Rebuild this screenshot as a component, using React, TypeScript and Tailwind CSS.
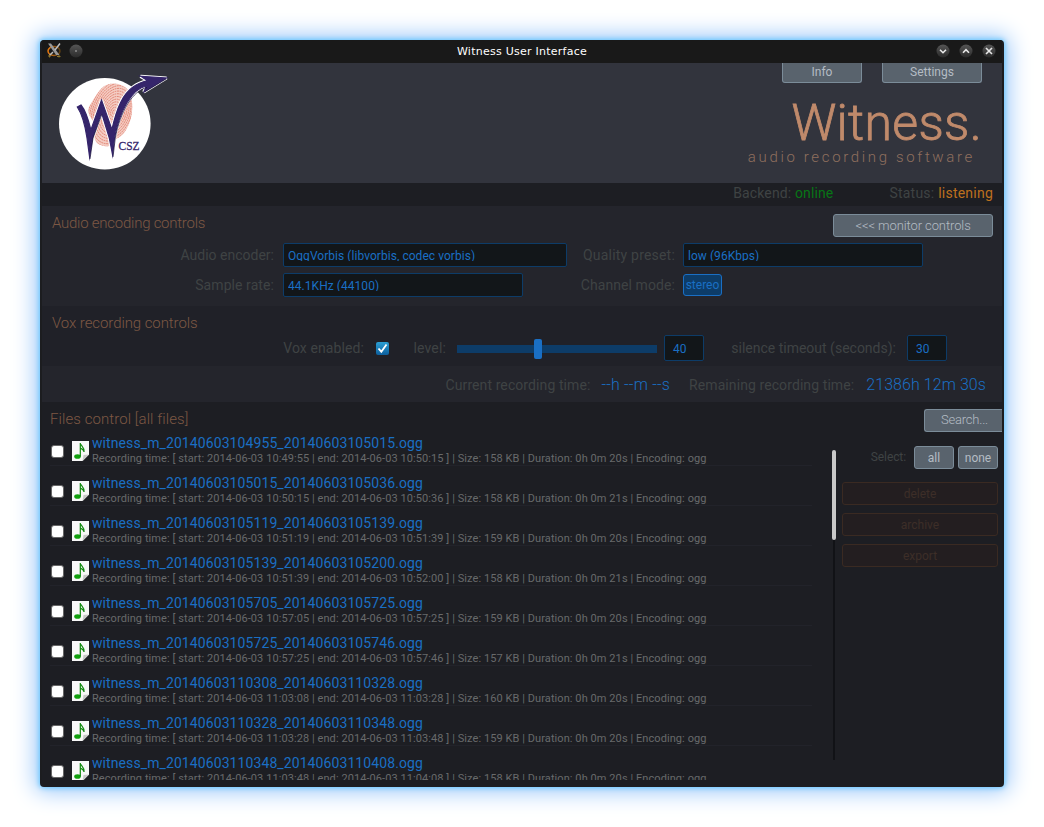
import React from "react";

type RecordingFile = { name: string; start: string; end: string; size: number; secs: number };

const files: RecordingFile[] = [
  { name: "witness_m_20140603104955_20140603105015.ogg", start: "10:49:55", end: "10:50:15", size: 158, secs: 20 },
  { name: "witness_m_20140603105015_20140603105036.ogg", start: "10:50:15", end: "10:50:36", size: 158, secs: 21 },
  { name: "witness_m_20140603105119_20140603105139.ogg", start: "10:51:19", end: "10:51:39", size: 159, secs: 20 },
  { name: "witness_m_20140603105139_20140603105200.ogg", start: "10:51:39", end: "10:52:00", size: 158, secs: 21 },
  { name: "witness_m_20140603105705_20140603105725.ogg", start: "10:57:05", end: "10:57:25", size: 159, secs: 20 },
  { name: "witness_m_20140603105725_20140603105746.ogg", start: "10:57:25", end: "10:57:46", size: 157, secs: 21 },
  { name: "witness_m_20140603110308_20140603110328.ogg", start: "11:03:08", end: "11:03:28", size: 160, secs: 20 },
  { name: "witness_m_20140603110328_20140603110348.ogg", start: "11:03:28", end: "11:03:48", size: 159, secs: 20 },
  { name: "witness_m_20140603110348_20140603110408.ogg", start: "11:03:48", end: "11:04:08", size: 158, secs: 20 },
];

function WindowButton({ d }: { d: string }) {
  return (
    <svg width="14" height="14" viewBox="0 0 14 14">
      <circle cx="7" cy="7" r="6.5" fill="url(#knob)" />
      <path d={d} fill="none" stroke="#e8e8e8" strokeWidth="1.6" />
    </svg>
  );
}

function TitleBar() {
  return (
    <div className="flex h-[23px] items-center bg-[#191919] pr-[6px] pb-[2px] pl-[5px]">
      <svg width="14" height="15" viewBox="0 0 14 15">
        <defs>
          <linearGradient id="knob" x1="0" y1="0" x2="0" y2="1">
            <stop offset="0" stopColor="#555" />
            <stop offset="1" stopColor="#2b2b2b" />
          </linearGradient>
          <linearGradient id="ring" x1="0" y1="0" x2="1" y2="0">
            <stop offset="0" stopColor="#e87a10" />
            <stop offset="1" stopColor="#5a3c10" />
          </linearGradient>
        </defs>
        <ellipse cx="7" cy="8" rx="6" ry="4.5" fill="none" stroke="url(#ring)" strokeWidth="1.5" />
        <path d="M1 .5h3l8.500 11.500h-3.500z" fill="#999" />
        <path d="M13 .500 8 7M6 9l-3.500 3.500" stroke="#bbb" strokeWidth="1.500" />
        <path d="M1 13h3M10 13.500h3.500M2.500 12v2.500M12 12v2.500" stroke="#8d742c" strokeWidth="1" />
      </svg>
      <svg className="ml-[8px]" width="14" height="14" viewBox="0 0 14 14">
        <circle cx="7" cy="7" r="6.500" fill="url(#knob)" />
        <circle cx="7" cy="7" r=".7" fill="#ddd" />
      </svg>
      <div className="flex-1 pt-[2px] pl-[25px] text-center font-['DejaVu_Sans'] text-[11px] leading-none tracking-[0.25px] text-white">
        Witness User Interface
      </div>
      <div className="flex gap-[9px]">
        <WindowButton d="M4 5.700 7 8.700 10 5.700" />
        <WindowButton d="M4 8.700 7 5.700 10 8.700" />
        <WindowButton d="M4 4l6 6M10 4l-6 6" />
      </div>
    </div>
  );
}

const LETTER =
  "M77.300 107L81 105C86 111 88.500 120 90.900 130L101.500 100 111.900 129.500C117 107 123 94 133 87C137 84 141 82 147.500 80.500L140.500 76.300 166.500 78 143.800 92 146.500 86C132 88.500 119.500 111 114.500 138L112.600 155 109.300 138 101.500 112.500 92.500 138 89.600 157 87 138C85 125 82 114 77.300 107Z";

function Logo() {
  return (
    <svg width="114" height="100" viewBox="57 72 114 100">
      <defs>
        <clipPath id="print">
          <path d="M103 87c5-4 13-5 20-1 6 3 9 9 9 16 1 11-1 20-6 28-3 5-7 8-11 9-3 7-6 8-11 7-6-1-9-4-10-10 0-4 1-9 0-13-3-6-7-9-5-16 4-6 8-15 14-20z" />
        </clipPath>
      </defs>
      <circle cx="104.800" cy="123.800" r="45.800" fill="#fff" />
      <g clipPath="url(#print)">
        <rect x="80" y="80" width="56" height="70" fill="#d9553a" opacity=".3" />
        <g fill="none" stroke="#cf3f26" strokeWidth=".8" opacity=".6" strokeDasharray="1.800 .7">
          {[1.500, 3.500, 5.500, 7.500, 9.500, 11.500, 13.500, 15.500, 17.500, 19.500, 21.500, 23.500, 25.500, 27.500, 29.500].map((r) => (
            <ellipse key={r} cx="114" cy="112" rx={r * 0.9} ry={r * 1.4} transform="rotate(20 114 112)" />
          ))}
        </g>
      </g>
      <path d={LETTER} fill="#fff" stroke="#fff" strokeWidth="3.200" strokeMiterlimit="3" />
      <path d={LETTER} fill="#35256b" stroke="#35256b" strokeWidth="1.200" strokeMiterlimit="8" />
      <path d="M166 79l-21.500 13M147 87.500C133 90 120 112 115.300 138L113 157M102 114L93 138 90 159" fill="none" stroke="#120c35" strokeWidth=".7" />
      <text x="118.500" y="149.500" fontFamily="Liberation Serif, serif" fontSize="13" textLength="21" lengthAdjust="spacingAndGlyphs" fill="#35256b" stroke="#35256b" strokeWidth=".3">
        CSZ
      </text>
    </svg>
  );
}

const slate = "flex items-center justify-center rounded-[3px] border border-[#7b8c99] bg-[#59636d] text-[#b4bcc4]";
const field = "flex h-6 items-center overflow-hidden rounded-[2px] border border-[#0d3c68] bg-[#121619] px-1 text-[12px] tracking-[0.05px] text-[#1a6fc4]";
const heading = "text-[15px] leading-[18px] font-light text-[#7d5844]";
const label = "text-right text-[14px] text-[#3f4344]";

function Header() {
  return (
    <header className="flex h-[120px] justify-between bg-[#32343d]">
      <div className="pt-[9px] pl-[15px]">
        <Logo />
      </div>
      <div className="flex flex-col items-end">
        <div className="flex gap-5 pr-5 text-[12px]">
          <div className={slate + " h-5 w-20 rounded-t-none border-t-0 pb-[1px]"}>Info</div>
          <div className={slate + " h-5 w-[100px] rounded-t-none border-t-0 pb-[1px]"}>Settings</div>
        </div>
        <div className="mt-[15px] mr-[20px] text-[50px] leading-[50px] font-light tracking-[0.3px] text-[#c08a6b] [-webkit-text-stroke:0.8px_#c08a6b]">
          Witness.
        </div>
        <div className="mr-[27px] text-[15px] leading-[18px] font-light tracking-[2.65px] text-[#8f6f5d]">audio recording software</div>
      </div>
    </header>
  );
}

function EncodingControls() {
  return (
    <section className="h-[100px] bg-[#24252c]">
      <div className="flex h-[37px] justify-between pt-2 pr-[9px] pl-[10px]">
        <h2 className={heading + " tracking-[-0.25px]"}>Audio encoding controls</h2>
        <div className={slate + " h-[23px] w-40 text-[13px] font-light tracking-[-0.1px]"}>&lt;&lt;&lt; monitor controls</div>
      </div>
      <div className="flex h-6 items-center">
        <div className={label + " w-[232px]"}>Audio encoder:</div>
        <div className={field + " ml-[9px] w-[284px]"}>
          <span className="h-3 overflow-hidden leading-[14px]">OggVorbis (libvorbis, codec vorbis)</span>
        </div>
        <div className={label + " w-[108px] tracking-[0.2px]"}>Quality preset:</div>
        <div className={field + " ml-2 w-[240px]"}>
          <span className="h-3 overflow-hidden leading-[14px]">low (96Kbps)</span>
        </div>
      </div>
      <div className="mt-[6px] flex h-6 items-center">
        <div className={label + " w-[232px] tracking-[0.08px]"}>Sample rate:</div>
        <div className={field + " ml-[9px] w-[240px] tracking-[0.2px]"}>
          <span className="h-3 overflow-hidden leading-[14px]">44.1KHz (44100)</span>
        </div>
        <div className={label + " w-[152px] tracking-[0.08px]"}>Channel mode:</div>
        <div className="ml-2 flex h-[22px] w-[39px] items-center justify-center rounded-[3px] border border-[#1a6fc4] bg-[#0d3c68] text-[12px] text-[#1a6fc4]">
          stereo
        </div>
      </div>
    </section>
  );
}

function VoxControls() {
  return (
    <section className="h-[60px] bg-[#202128]">
      <div className="h-[29px] pt-2 pl-[10px]">
        <h2 className={heading + " tracking-[-0.08px]"}>Vox recording controls</h2>
      </div>
      <div className="flex h-[26px] items-center">
        <div className={label + " w-[322px] tracking-[0.1px]"}>Vox enabled:</div>
        <div className="ml-3 flex size-[13px] items-center justify-center rounded-[2px] bg-linear-to-b from-[#2c9fd3] to-[#0d5f9d]">
          <svg width="11" height="11" viewBox="0 0 11 11">
            <path d="M1.500 5.500 4.300 8.700 9.500 1.500" fill="none" stroke="#fff" strokeWidth="1.800" />
          </svg>
        </div>
        <div className={label + " w-[57px] tracking-[0.15px]"}>level:</div>
        <div className="ml-[11px] flex h-5 w-[200px] items-center pt-[2px]">
          <div className="h-2 w-[77px] bg-[#0d3c68]" />
          <div className="h-5 w-2 rounded-[2px] bg-[#1a6fc4]" />
          <div className="h-2 flex-1 bg-[#0d3c68]" />
        </div>
        <div className="ml-[7px] flex h-[26px] w-10 shrink-0 items-center rounded-[2px] border border-[#0d3c68] bg-[#121619] pt-[1px] pl-2 text-[12px] text-[#1a6fc4]">40</div>
        <div className={label + " w-[192px]"}>silence timeout (seconds):</div>
        <div className="ml-[11px] flex h-[26px] w-10 shrink-0 items-center rounded-[2px] border border-[#0d3c68] bg-[#121619] pt-[1px] pl-2 text-[12px] text-[#1a6fc4]">30</div>
      </div>
    </section>
  );
}

function FileRow({ file }: { file: RecordingFile }) {
  return (
    <li className="flex h-10 w-[762px] shrink-0 border-b border-[#22232a]">
      <div className="mt-[19px] ml-[1px] size-[13px] rounded-[3px] border border-[#666] bg-white" />
      <svg className="mt-[15px] ml-[8px]" width="17" height="20" viewBox="0 0 17 20">
        <path d="M0 0h17v13.500L10.500 20H0z" fill="#f8f8f8" />
        <path d="M10.500 20l1-6 5.500-.5z" fill="#c8c8c8" />
        <ellipse cx="5.500" cy="15.500" rx="3.300" ry="2.300" fill="#12a00e" />
        <path d="M8.300 15.500V2c.4 3 4.600 4.500 3.800 9-.2-2-1.800-3-3.800-4" fill="none" stroke="#138a10" strokeWidth="1.200" />
      </svg>
      <div className="ml-[3px] pt-[9px] whitespace-nowrap">
        <div className="text-[14px] leading-[16px] tracking-[0.09px] text-[#1a6fc4]">{file.name}</div>
        <div className="pt-[1px] text-[11px] leading-[14px] tracking-[0.075px] text-[#686a6b]">
          Recording time: [ start: 2014-06-03 {file.start} | end: 2014-06-03 {file.end} ] | Size: {file.size} KB | Duration: 0h 0m {file.secs}s | Encoding: ogg
        </div>
      </div>
    </li>
  );
}

function FilesControl() {
  const disabled = "flex h-[23px] items-center justify-center rounded-[3px] border border-[#3a2a22] bg-[#231e20] text-[12px] text-[#3d2e28]";
  return (
    <section className="flex h-[378px] bg-[#1d1e23]">
      <div className="h-full w-[790px] overflow-hidden pl-2">
        <h2 className={heading + " h-6 pt-2 tracking-[0.08px]"}>Files control [all files]</h2>
        <ul className="flex flex-col">
          {files.map((f) => (
            <FileRow key={f.name} file={f} />
          ))}
        </ul>
      </div>
      <div className="flex w-1 flex-col items-center pt-12">
        <div className="h-[90px] w-1 shrink-0 rounded-[2px] bg-[#c8c8c8]" />
        <div className="h-[220px] w-[2px] bg-[#111216]" />
      </div>
      <div className="flex flex-1 flex-col pt-[7px]">
        <div className={slate + " h-[23px] w-[78px] self-end rounded-r-none border-r-0 pb-[1px] pl-[2px] text-[13px] font-light tracking-[-0.2px]"}>Search...</div>
        <div className="mt-[14px] flex items-center justify-end gap-1 pr-1 text-[12px]">
          <span className="mr-1 pb-[2px] tracking-[-0.1px] text-[#3f4344]">Select:</span>
          <div className={slate + " h-[23px] w-10"}>all</div>
          <div className={slate + " h-[23px] w-10"}>none</div>
        </div>
        <div className="mt-[13px] flex flex-col gap-2 pr-1 pl-[6px]">
          <div className={disabled}>delete</div>
          <div className={disabled}>archive</div>
          <div className={disabled}>export</div>
        </div>
      </div>
    </section>
  );
}

export default function App() {
  return (
    <main className="h-[827px] w-[1044px] overflow-hidden bg-white p-10 font-[Roboto,sans-serif]">
      <div className="h-[747px] w-[964px] overflow-hidden rounded-[4px] border-x-2 border-b-[7px] border-[#1c1d20] bg-[#1c1d20] shadow-[0_0_5px_1px_#68c8ff,0_0_22px_5px_#9cc8fa]">
        <TitleBar />
        <Header />
        <div className="flex h-[23px] items-center justify-end bg-[#1d1e23] pr-[9px] pb-[2px] text-[14px] text-[#3f4344]">
          <span className="mr-14 tracking-[0.13px]">
            Backend: <span className="text-[#087516]">online</span>
          </span>
          <span className="tracking-[0.23px]">
            Status: <span className="text-[#bd701e]">listening</span>
          </span>
        </div>
        <EncodingControls />
        <VoxControls />
        <div className="flex h-9 items-center justify-end bg-[#24252c] pt-[2px] pr-4">
          <span className={label + " tracking-[0.09px]"}>Current recording time:</span>
          <span className="ml-[11px] text-[16px] font-light tracking-[0.2px] text-[#1a6fc4]">--h --m --s</span>
          <span className={label + " ml-[19px] tracking-[0.09px]"}>Remaining recording time:</span>
          <span className="ml-3 text-[16px] font-light tracking-[0.07px] text-[#1a6fc4]">21386h 12m 30s</span>
        </div>
        <FilesControl />
      </div>
    </main>
  );
}
